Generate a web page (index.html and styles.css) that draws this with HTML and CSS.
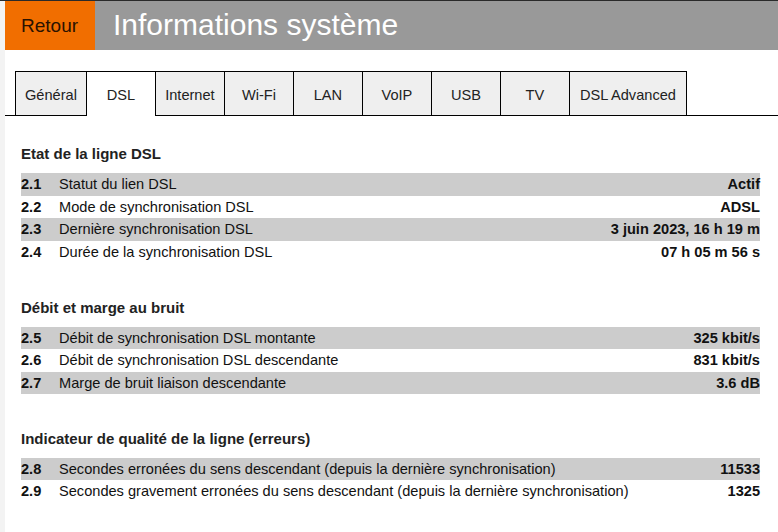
FILE: index.html
```html
<!DOCTYPE html>
<html lang="fr">
<head>
<meta charset="utf-8">
<title>Informations système</title>
<link rel="stylesheet" href="styles.css">
</head>
<body>
<div class="topline"></div>
<div class="page">
  <header class="hdr">
    <div class="back">Retour</div>
    <h1 class="title">Informations système</h1>
  </header>
  <nav class="tabs">
    <div class="tab">Général</div>
    <div class="tab active">DSL</div>
    <div class="tab">Internet</div>
    <div class="tab">Wi-Fi</div>
    <div class="tab">LAN</div>
    <div class="tab">VoIP</div>
    <div class="tab">USB</div>
    <div class="tab">TV</div>
    <div class="tab last">DSL Advanced</div>
  </nav>
  <main class="content">
    <section class="sec">
      <h2 class="sec-title">Etat de la ligne DSL</h2>
      <div class="rows">
        <div class="row odd"><span class="num">2.1</span><span class="lbl">Statut du lien DSL</span><span class="val">Actif</span></div>
        <div class="row"><span class="num">2.2</span><span class="lbl">Mode de synchronisation DSL</span><span class="val">ADSL</span></div>
        <div class="row odd"><span class="num">2.3</span><span class="lbl">Dernière synchronisation DSL</span><span class="val">3 juin 2023, 16 h 19 m</span></div>
        <div class="row"><span class="num">2.4</span><span class="lbl">Durée de la synchronisation DSL</span><span class="val">07 h 05 m 56 s</span></div>
      </div>
    </section>
    <section class="sec">
      <h2 class="sec-title">Débit et marge au bruit</h2>
      <div class="rows">
        <div class="row odd"><span class="num">2.5</span><span class="lbl">Débit de synchronisation DSL montante</span><span class="val">325 kbit/s</span></div>
        <div class="row"><span class="num">2.6</span><span class="lbl">Débit de synchronisation DSL descendante</span><span class="val">831 kbit/s</span></div>
        <div class="row odd"><span class="num">2.7</span><span class="lbl">Marge de bruit liaison descendante</span><span class="val">3.6 dB</span></div>
      </div>
    </section>
    <section class="sec">
      <h2 class="sec-title">Indicateur de qualité de la ligne (erreurs)</h2>
      <div class="rows">
        <div class="row odd"><span class="num">2.8</span><span class="lbl">Secondes erronées du sens descendant (depuis la dernière synchronisation)</span><span class="val">11533</span></div>
        <div class="row"><span class="num">2.9</span><span class="lbl">Secondes gravement erronées du sens descendant (depuis la dernière synchronisation)</span><span class="val">1325</span></div>
      </div>
    </section>
  </main>
</div>
</body>
</html>
```
FILE: styles.css
```css
html, body {
  margin: 0;
  padding: 0;
}
body {
  background: #f3f3f3;
  font-family: "Liberation Sans", Arial, sans-serif;
  color: #111;
  height: 532px;
  overflow: hidden;
}
.topline {
  height: 1px;
  background: #2a2a2a;
}
.page {
  margin-left: 5px;
  background: #fff;
  height: 531px;
}
.hdr {
  display: flex;
  height: 49px;
}
.back {
  width: 74px;
  padding-left: 16px;
  background: #f16e00;
  color: #2a1200;
  font-size: 19px;
  line-height: 49px;
}
.title {
  flex: 1;
  margin: 0;
  padding-left: 18px;
  background: #999999;
  color: #fff;
  font-weight: normal;
  font-size: 30px;
  line-height: 47px;
}
.tabs {
  display: flex;
  margin-top: 21px;
  padding-left: 10px;
  border-bottom: 1px solid #000;
  height: 44px;
}
.tab {
  min-width: 50px;
  padding: 0 9px;
  height: 43px;
  line-height: 47px;
  text-align: center;
  font-size: 14.6px;
  color: #222;
  background: #efefef;
  border-top: 1px solid #000;
  border-left: 1px solid #000;
}
.tab.last {
  padding: 0 10px;
  border-right: 1px solid #000;
}
.tab.active {
  background: #fff;
  height: 44px;
  margin-bottom: -1px;
}
.content {
  padding: 0 18px 0 16px;
}
.sec {
  margin-top: 35.5px;
}
.sec:first-child {
  margin-top: 29px;
}
.sec-title {
  margin: 0 0 10px;
  font-size: 15px;
  line-height: 18px;
  font-weight: bold;
  color: #222;
}
.rows {
  display: flex;
  flex-direction: column;
}
.row {
  display: flex;
  height: 22.5px;
  line-height: 22.5px;
  font-size: 14.6px;
}
.row.odd {
  background: #cccccc;
}
.num {
  width: 38px;
  font-weight: bold;
}
.lbl {
  flex: 1;
}
.val {
  font-weight: bold;
  text-align: right;
}
```
